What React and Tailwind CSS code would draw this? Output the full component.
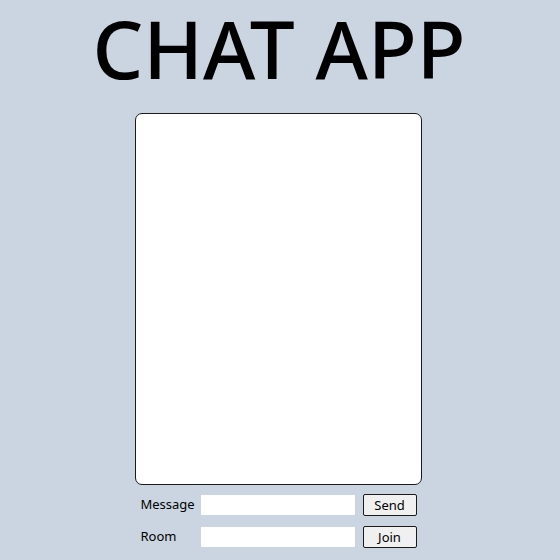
export default function App() {
  return (
    <div className="min-h-[560px] w-full bg-[#cbd5e1] flex flex-col items-center" style={{ fontFamily: '"Noto Sans", "Open Sans", sans-serif' }}>
      <h1 className="text-[80px] leading-[96px] font-medium text-black mr-[2px]">CHAT APP</h1>
      <div className="mt-[17px] mr-[4px] w-[287px] h-[372px] bg-white border border-[#1a1a1a] rounded-[7px]"></div>
      <div className="mt-[9px] mr-[4px] w-[287px] flex flex-col gap-[10px] pl-[6px] text-[13px] text-black">
        <div className="flex items-center">
          <span className="w-[60px]">Message</span>
          <input className="w-[154px] h-[20px] bg-white outline-none border-0" />
          <button className="ml-[8px] w-[54px] h-[22px] border border-[#1a1a1a] rounded-[2px] bg-[#f0f0f0] text-[13px] leading-none">Send</button>
        </div>
        <div className="flex items-center">
          <span className="w-[60px]">Room</span>
          <input className="w-[154px] h-[20px] bg-white outline-none border-0" />
          <button className="ml-[8px] w-[54px] h-[22px] border border-[#1a1a1a] rounded-[2px] bg-[#f0f0f0] text-[13px] leading-none">Join</button>
        </div>
      </div>
    </div>
  );
}
